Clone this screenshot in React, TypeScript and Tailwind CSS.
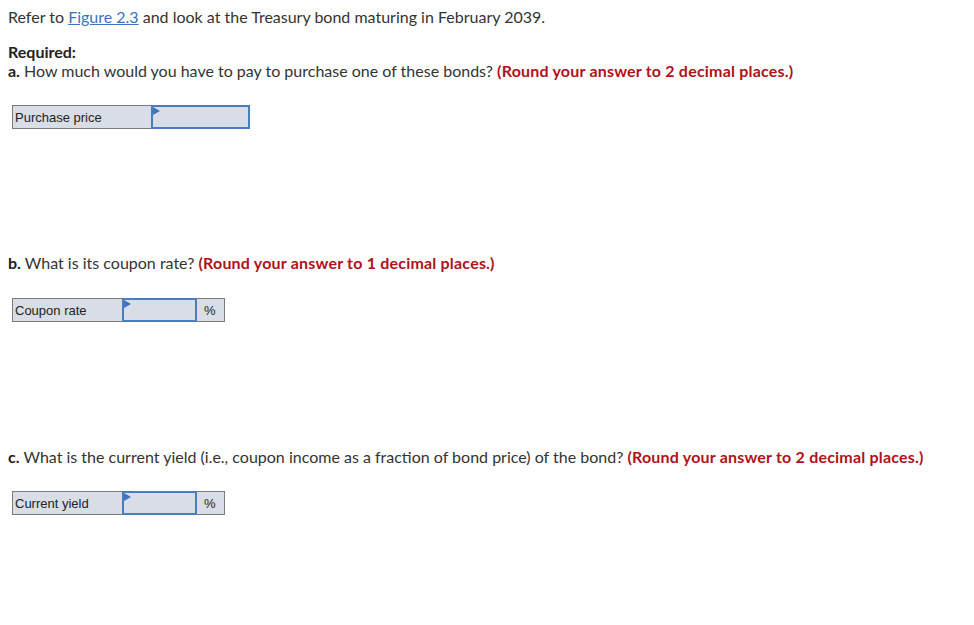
const Flag = () => (
  <svg width="7" height="8" viewBox="0 0 7 8" className="absolute left-0 top-0">
    <path d="M0 0 L7 4 L0 8 Z" fill="#3f74c0" />
  </svg>
)

function AnswerRow({ label, labelW, inputW, unit }: { label: string; labelW: string; inputW: string; unit?: boolean }) {
  return (
    <div className="ml-[4px] flex h-[24px] font-['Liberation_Sans',Arial,sans-serif] text-[13px] text-[#222]">
      <div className={`${labelW} flex items-center border border-[#7b7b7b] bg-[#d9dde6] pl-[2px] pt-px`}>{label}</div>
      <div className={`${inputW} relative -ml-px border-2 border-[#4a7cc0] bg-[#d9dde6]`}>
        <Flag />
      </div>
      {unit && (
        <div className="-ml-px flex w-[29px] items-center border border-[#7b7b7b] bg-[#d9dde6] pl-[7px] pt-px">%</div>
      )}
    </div>
  )
}

export default function App() {
  return (
    <div className="h-[625px] w-[974px] bg-white px-[8px] pt-[7px] font-['Lato',sans-serif] text-[16px] leading-[19px] text-[#333]">
      <p>
        Refer to <span className="text-[#3b73b9] underline">Figure 2.3</span> and look at the Treasury bond maturing in
        February 2039.
      </p>

      <p className="mt-[16px] font-bold text-[#222]">Required:</p>
      <p>
        <span className="font-bold text-[#222]">a.</span> How much would you have to pay to purchase one of these
        bonds? <span className="font-bold tracking-[0.2px] text-[#b0111a]">(Round your answer to 2 decimal places.)</span>
      </p>
      <div className="mt-[25px]">
        <AnswerRow label="Purchase price" labelW="w-[140px]" inputW="w-[99px]" />
      </div>

      <p className="mt-[124px]">
        <span className="font-bold text-[#222]">b.</span> What is its coupon rate?{' '}
        <span className="font-bold tracking-[0.2px] text-[#b0111a]">(Round your answer to 1 decimal places.)</span>
      </p>
      <div className="mt-[26px]">
        <AnswerRow label="Coupon rate" labelW="w-[111px]" inputW="w-[75px]" unit />
      </div>

      <p className="mt-[125px]">
        <span className="font-bold text-[#222]">c.</span> What is the current yield (i.e., coupon income as a fraction
        of bond price) of the bond?{' '}
        <span className="font-bold tracking-[0.2px] text-[#b0111a]">(Round your answer to 2 decimal places.)</span>
      </p>
      <div className="mt-[25px]">
        <AnswerRow label="Current yield" labelW="w-[111px]" inputW="w-[75px]" unit />
      </div>
    </div>
  )
}
